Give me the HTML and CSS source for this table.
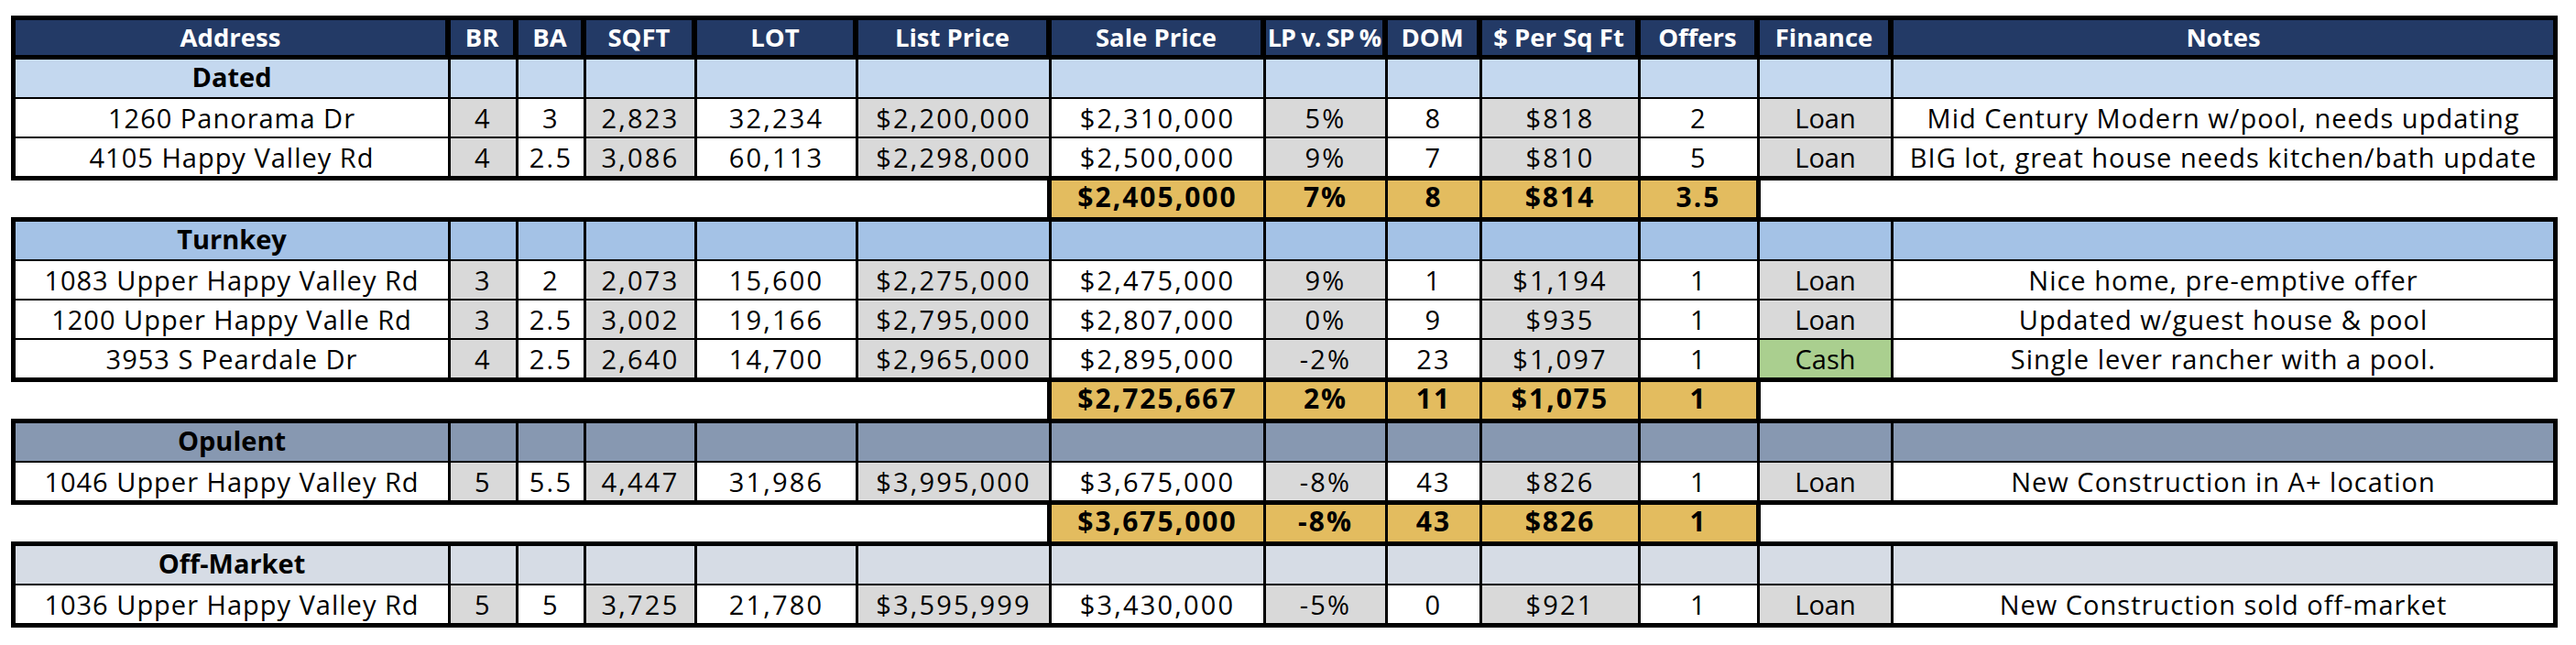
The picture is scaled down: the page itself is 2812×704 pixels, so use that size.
FILE: index.html
```html
<!DOCTYPE html>
<html lang="en">
<head>
<meta charset="utf-8">
<title>Comparable Sales</title>
<link rel="stylesheet" href="styles.css">
</head>
<body>
<div class="sheet">
  <div class="row head">
    <div>Address</div><div>BR</div><div>BA</div><div>SQFT</div><div>LOT</div><div>List Price</div><div>Sale Price</div><div class="lp">LP v. SP %</div><div>DOM</div><div>$ Per Sq Ft</div><div>Offers</div><div>Finance</div><div>Notes</div>
  </div>

  <div class="row sec dated">
    <div class="label">Dated</div><div></div><div></div><div></div><div></div><div></div><div></div><div></div><div></div><div></div><div></div><div></div><div></div>
  </div>
  <div class="row data">
    <div class="t">1260 Panorama Dr</div><div>4</div><div>3</div><div>2,823</div><div>32,234</div><div>$2,200,000</div><div>$2,310,000</div><div>5%</div><div>8</div><div>$818</div><div>2</div><div class="fin">Loan</div><div class="t">Mid Century Modern w/pool, needs updating</div>
  </div>
  <div class="row data">
    <div class="t">4105 Happy Valley Rd</div><div>4</div><div>2.5</div><div>3,086</div><div>60,113</div><div>$2,298,000</div><div>$2,500,000</div><div>9%</div><div>7</div><div>$810</div><div>5</div><div class="fin">Loan</div><div class="t">BIG lot, great house needs kitchen/bath update</div>
  </div>
  <div class="row sum">
    <div class="blank-l"></div><div class="g">$2,405,000</div><div class="g">7%</div><div class="g">8</div><div class="g">$814</div><div class="g gl">3.5</div><div class="blank-r"></div>
  </div>

  <div class="row sec turnkey">
    <div class="label">Turnkey</div><div></div><div></div><div></div><div></div><div></div><div></div><div></div><div></div><div></div><div></div><div></div><div></div>
  </div>
  <div class="row data">
    <div class="t">1083 Upper Happy Valley Rd</div><div>3</div><div>2</div><div>2,073</div><div>15,600</div><div>$2,275,000</div><div>$2,475,000</div><div>9%</div><div>1</div><div>$1,194</div><div>1</div><div class="fin">Loan</div><div class="t">Nice home, pre-emptive offer</div>
  </div>
  <div class="row data">
    <div class="t">1200 Upper Happy Valle Rd</div><div>3</div><div>2.5</div><div>3,002</div><div>19,166</div><div>$2,795,000</div><div>$2,807,000</div><div>0%</div><div>9</div><div>$935</div><div>1</div><div class="fin">Loan</div><div class="t">Updated w/guest house &amp; pool</div>
  </div>
  <div class="row data">
    <div class="t">3953 S Peardale Dr</div><div>4</div><div>2.5</div><div>2,640</div><div>14,700</div><div>$2,965,000</div><div>$2,895,000</div><div>-2%</div><div>23</div><div>$1,097</div><div>1</div><div class="fin cash">Cash</div><div class="t">Single lever rancher with a pool.</div>
  </div>
  <div class="row sum">
    <div class="blank-l"></div><div class="g">$2,725,667</div><div class="g">2%</div><div class="g">11</div><div class="g">$1,075</div><div class="g gl">1</div><div class="blank-r"></div>
  </div>

  <div class="row sec opulent">
    <div class="label">Opulent</div><div></div><div></div><div></div><div></div><div></div><div></div><div></div><div></div><div></div><div></div><div></div><div></div>
  </div>
  <div class="row data">
    <div class="t">1046 Upper Happy Valley Rd</div><div>5</div><div>5.5</div><div>4,447</div><div>31,986</div><div>$3,995,000</div><div>$3,675,000</div><div>-8%</div><div>43</div><div>$826</div><div>1</div><div class="fin">Loan</div><div class="t">New Construction in A+ location</div>
  </div>
  <div class="row sum">
    <div class="blank-l"></div><div class="g">$3,675,000</div><div class="g">-8%</div><div class="g">43</div><div class="g">$826</div><div class="g gl">1</div><div class="blank-r"></div>
  </div>

  <div class="row sec offmarket">
    <div class="label">Off-Market</div><div></div><div></div><div></div><div></div><div></div><div></div><div></div><div></div><div></div><div></div><div></div><div></div>
  </div>
  <div class="row data">
    <div class="t">1036 Upper Happy Valley Rd</div><div>5</div><div>5</div><div>3,725</div><div>21,780</div><div>$3,595,999</div><div>$3,430,000</div><div>-5%</div><div>0</div><div>$921</div><div>1</div><div class="fin">Loan</div><div class="t">New Construction sold off-market</div>
  </div>
</div>
</body>
</html>
```

FILE: styles.css
```css
* { box-sizing: border-box; }

html, body {
  margin: 0;
  background: #ffffff;
}

body {
  font-family: "Open Sans", "Liberation Sans", sans-serif;
  color: #000000;
}

.sheet {
  margin: 17px 0 0 12px;
  width: 2780px;
  display: grid;
  grid-template-columns: 477px 71px 71px 118px 173px 208px 231px 130px 100px 170px 127px 143px 725px;
  column-gap: 3px;
  row-gap: 2px;
  padding: 5px 0;
  background: #000000;
}

.row { display: contents; }

.row > div {
  height: 41px;
  line-height: 41px;
  font-size: 29px;
  text-align: center;
  white-space: nowrap;
  overflow: hidden;
  background: #ffffff;
}

.row > div:first-child { margin-left: 5px; }
.row > div:last-child { margin-right: 5px; }

/* column header */
.head > div {
  height: 38px;
  line-height: 38px;
  margin-bottom: 3px;
  margin-right: 3px;
  font-size: 27.5px;
  font-weight: 700;
  color: #ffffff;
  background: #233a66;
}
.head > .lp {
  font-size: 27px;
  letter-spacing: -0.9px;
}

/* section header rows */
.sec > .label {
  font-weight: 700;
  line-height: 38px;
}
.dated > div { background: #c4d8ef; }
.turnkey > div { background: #a4c2e6; }
.opulent > div { background: #8798b1; }
.offmarket > div { background: #d6dce5; }

/* data rows */
.data > div { letter-spacing: 2.2px; }
.data > div:nth-child(even) { background: #d9d9d9; }
.data > div.t { letter-spacing: 1px; }
.data > div.fin { letter-spacing: 0; }
.data > div.cash { background: #aacf8f; }

/* summary rows */
.sum > div {
  height: 40px;
  line-height: 36px;
  margin: 3px 0;
  font-size: 30px;
  font-weight: 700;
  letter-spacing: 2px;
}
.row.sum > div { overflow: visible; }
.sum > .g { background: #e3bc5f; }
.row.sum > .gl { margin-right: 1px; }
.row.sum > .blank-l {
  grid-column: 1 / span 6;
  margin-left: 0;
  margin-right: 2px;
}
.row.sum > .blank-r {
  grid-column: 12 / span 2;
  margin-left: 1px;
  margin-right: 0;
}
```
